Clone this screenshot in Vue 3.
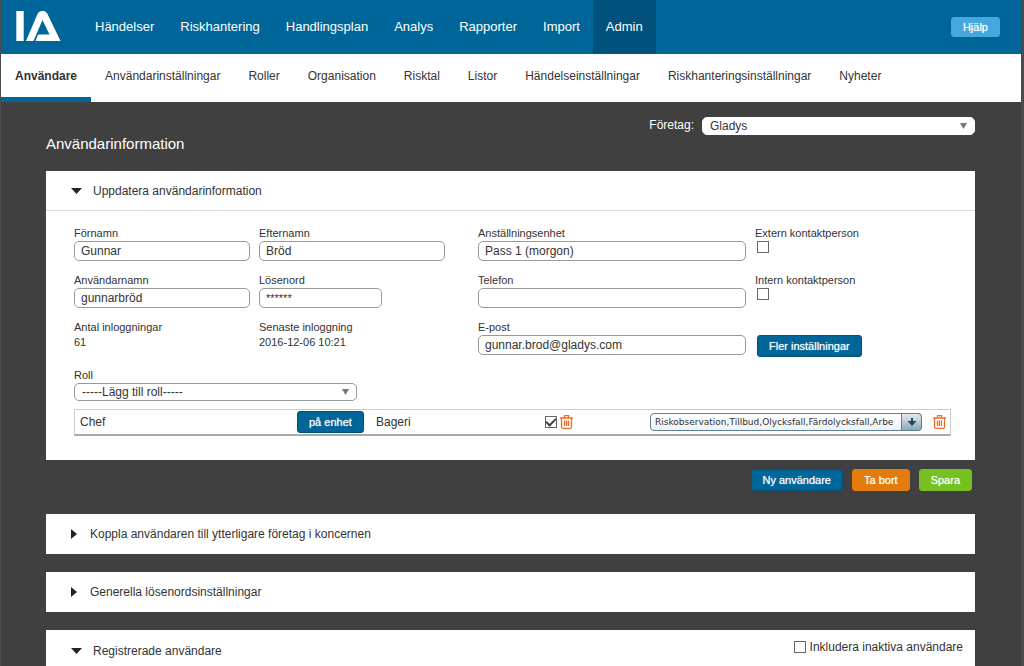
<script setup>
import { ref } from 'vue'

const mainNav = ['Händelser', 'Riskhantering', 'Handlingsplan', 'Analys', 'Rapporter', 'Import', 'Admin']
const subNav = [
  'Användare',
  'Användarinställningar',
  'Roller',
  'Organisation',
  'Risktal',
  'Listor',
  'Händelseinställningar',
  'Riskhanteringsinställningar',
  'Nyheter',
]

const user = ref({
  first: 'Gunnar',
  last: 'Bröd',
  unit: 'Pass 1 (morgon)',
  login: 'gunnarbröd',
  password: '******',
  phone: '',
  email: 'gunnar.brod@gladys.com',
  external: false,
  internal: false,
})
const roleActive = ref(true)
const includeInactive = ref(false)
</script>

<template>
  <div class="page">
    <header class="top">
      <a href="#" class="logo" aria-label="IA">
        <svg width="46" height="32" viewBox="0 0 46 32">
          <path fill="#fff" d="M1.300 0h7.400v30H1.300z" />
          <path
            fill="#fff"
            d="M11 30 22.500 3Q24 0 27 0h1.500Q31 0 32.500 3L45.500 30H20.500l2.700-6.500H34.500L27.500 9 18.500 30z"
          />
        </svg>
      </a>
      <nav class="main-nav">
        <a v-for="item in mainNav" :key="item" href="#" :class="{ current: item === 'Admin' }">{{ item }}</a>
      </nav>
      <button type="button" class="btn help">Hjälp</button>
    </header>

    <nav class="sub-nav">
      <a v-for="item in subNav" :key="item" href="#" :class="{ current: item === 'Användare' }">{{ item }}</a>
    </nav>

    <main class="main">
      <div class="company">
        <label for="company">Företag:</label>
        <div class="select">
          <select id="company"><option>Gladys</option></select>
          <svg class="caret" width="7" height="6" viewBox="0 0 7 6"><path fill="#777" d="M0 0h7L3.500 6z" /></svg>
        </div>
      </div>
      <h1>Användarinformation</h1>

      <section class="panel">
        <h2 class="panel-head ruled">
          <button type="button" class="toggle open">
            <svg width="11" height="6" viewBox="0 0 11 6"><path fill="#222" d="M0 0h11L5.500 6z" /></svg>
            Uppdatera användarinformation
          </button>
        </h2>

        <form class="form" @submit.prevent>
          <div class="fields">
            <div class="field">
              <label for="first">Förnamn</label>
              <input id="first" v-model="user.first" type="text" />
            </div>
            <div class="field wide-gap">
              <label for="last">Efternamn</label>
              <input id="last" v-model="user.last" type="text" />
            </div>
            <div class="field">
              <label for="unit">Anställningsenhet</label>
              <input id="unit" v-model="user.unit" type="text" />
            </div>
            <div class="field">
              <label for="external">Extern kontaktperson</label>
              <input id="external" v-model="user.external" type="checkbox" />
            </div>

            <div class="field">
              <label for="login">Användarnamn</label>
              <input id="login" v-model="user.login" type="text" />
            </div>
            <div class="field">
              <label for="password">Lösenord</label>
              <input id="password" v-model="user.password" class="short" type="text" />
            </div>
            <div class="field">
              <label for="phone">Telefon</label>
              <input id="phone" v-model="user.phone" type="text" />
            </div>
            <div class="field">
              <label for="internal">Intern kontaktperson</label>
              <input id="internal" v-model="user.internal" type="checkbox" />
            </div>

            <div class="field">
              <span class="caption">Antal inloggningar</span>
              <span>61</span>
            </div>
            <div class="field">
              <span class="caption">Senaste inloggning</span>
              <span>2016-12-06 10:21</span>
            </div>
            <div class="field">
              <label for="email">E-post</label>
              <input id="email" v-model="user.email" type="text" />
            </div>
            <div class="field more">
              <button type="button" class="btn">Fler inställningar</button>
            </div>
          </div>

          <div class="role">
            <label for="role">Roll</label>
            <div class="select outlined">
              <select id="role"><option>-----Lägg till roll-----</option></select>
              <svg class="caret" width="7" height="6" viewBox="0 0 7 6"><path fill="#777" d="M0 0h7L3.500 6z" /></svg>
            </div>
          </div>

          <table class="roles">
            <tbody>
              <tr>
                <td class="c-role">Chef</td>
                <td class="c-on"><button type="button" class="btn">på enhet</button></td>
                <td class="c-unit">Bageri</td>
                <td class="c-tick">
                  <div class="tools">
                    <input v-model="roleActive" type="checkbox" aria-label="Aktiv" />
                    <button type="button" class="trash" aria-label="Ta bort enhet">
                      <svg width="13" height="14" viewBox="0 0 13 14" fill="none" stroke="#ee6f23" stroke-width="1.3">
                        <path d="M0 3h13M4.500 3V.700h4V3M1.500 3v9q0 1.300 1.300 1.300h7.400q1.300 0 1.300-1.300V3M4.500 5.500v5.500M6.500 5.500v5.500M8.500 5.500v5.500" />
                      </svg>
                    </button>
                  </div>
                </td>
                <td class="c-types">
                  <div class="types">
                    <select aria-label="Händelsetyper">
                      <option>Riskobservation,Tillbud,Olycksfall,Färdolycksfall,Arbe</option>
                    </select>
                    <span class="drop">
                      <svg width="10" height="8" viewBox="0 0 10 8">
                        <path fill="#24465f" d="M4 0h2v3h3.500L5 8 .500 3H4z" />
                      </svg>
                    </span>
                  </div>
                </td>
                <td class="c-del">
                  <button type="button" class="trash" aria-label="Ta bort roll">
                    <svg width="13" height="14" viewBox="0 0 13 14" fill="none" stroke="#ee6f23" stroke-width="1.3">
                      <path d="M0 3h13M4.500 3V.700h4V3M1.500 3v9q0 1.300 1.300 1.300h7.400q1.300 0 1.300-1.300V3M4.500 5.500v5.500M6.500 5.500v5.500M8.500 5.500v5.500" />
                    </svg>
                  </button>
                </td>
              </tr>
            </tbody>
          </table>
        </form>
      </section>

      <div class="actions">
        <button type="button" class="btn">Ny användare</button>
        <button type="button" class="btn orange">Ta bort</button>
        <button type="button" class="btn green">Spara</button>
      </div>

      <section class="panel spaced">
        <h2 class="panel-head">
          <button type="button" class="toggle">
            <svg width="6" height="10" viewBox="0 0 6 10"><path fill="#222" d="M0 0v10L6 5z" /></svg>
            Koppla användaren till ytterligare företag i koncernen
          </button>
        </h2>
      </section>

      <section class="panel spaced">
        <h2 class="panel-head">
          <button type="button" class="toggle">
            <svg width="6" height="10" viewBox="0 0 6 10"><path fill="#222" d="M0 0v10L6 5z" /></svg>
            Generella lösenordsinställningar
          </button>
        </h2>
      </section>

      <section class="panel last">
        <h2 class="panel-head">
          <button type="button" class="toggle open">
            <svg width="11" height="6" viewBox="0 0 11 6"><path fill="#222" d="M0 0h11L5.500 6z" /></svg>
            Registrerade användare
          </button>
        </h2>
        <label class="inactive">
          <input v-model="includeInactive" type="checkbox" />
          Inkludera inaktiva användare
        </label>
      </section>
    </main>
  </div>
</template>

<style>
body {
  background: #4b4b4b;
}
</style>

<style scoped>
.page,
.page * {
  box-sizing: border-box;
}
.page {
  display: flex;
  flex-direction: column;
  min-height: 100vh;
  margin: 0 3px 0 1px;
  background: #404040;
  color: #333;
  font: 12px/16px "Liberation Sans", Arial, sans-serif;
}
a {
  color: inherit;
  text-decoration: none;
}
button,
input,
select {
  margin: 0;
  font-family: inherit;
  color: inherit;
}
svg {
  display: block;
  flex: none;
}

.top {
  display: flex;
  align-items: center;
  height: 54px;
  padding: 0 21px 0 14px;
  background: #006699;
  color: #fff;
  font-size: 13px;
}
.logo {
  width: 67px;
}
.main-nav {
  display: flex;
  flex: 1;
  align-self: stretch;
}
.main-nav a {
  display: flex;
  align-items: center;
  padding: 0 13px;
}
.main-nav .current {
  background: #00527d;
}

.sub-nav {
  display: flex;
  height: 48px;
  background: #fff;
}
.sub-nav a {
  padding: 14px 14px 0;
}
.sub-nav .current {
  border-bottom: 5px solid #006699;
  font-weight: bold;
}

.btn {
  height: 22px;
  padding: 0 11px;
  border: 1px solid #005078;
  border-radius: 3px;
  background: #006699;
  color: #fff;
  font-size: 11px;
  line-height: 20px;
  text-shadow: 0 0 1px rgba(255, 255, 255, 0.7);
  white-space: nowrap;
}
.btn.help {
  height: 20px;
  border-color: #44a8de;
  background: #44a8de;
  line-height: 18px;
}
.btn.orange {
  border-color: #e37c0c;
  background: #e37c0c;
}
.btn.green {
  border-color: #76c022;
  background: #76c022;
}

.main {
  display: flex;
  flex: 1;
  flex-direction: column;
  padding: 15px 46px 0 45px;
}
.company {
  display: flex;
  justify-content: flex-end;
  gap: 8px;
  color: #fff;
}
.company .select {
  width: 273px;
}
.select {
  display: grid;
  align-items: center;
}
.select > * {
  grid-area: 1 / 1;
}
.select select {
  appearance: none;
  width: 100%;
  height: 18px;
  padding: 0 7px;
  border: 1px solid #fff;
  border-radius: 5px;
  background: #fff;
  color: #333;
  font-size: 12px;
}
.select.outlined select {
  border-color: #999;
}
.caret {
  justify-self: end;
  margin-right: 8px;
  pointer-events: none;
}
h1 {
  margin: 0 0 19px;
  color: #fff;
  font-size: 15px;
  font-weight: normal;
  line-height: 17px;
}

.panel {
  background: #fff;
}
.panel-head {
  margin: 0;
  padding: 0 24px;
  font-size: 12px;
  font-weight: normal;
}
.panel-head.ruled {
  border-bottom: 1px solid #ddd;
}
.toggle {
  display: flex;
  align-items: center;
  gap: 13px;
  height: 40px;
  padding: 0 1px;
  border: 0;
  background: none;
  font-size: 12px;
}
.toggle.open {
  gap: 11px;
  height: 39px;
}

.form {
  padding: 14px 24px 24px 28px;
}
.fields {
  display: grid;
  grid-template-columns: 185fr 219fr 277fr 196fr;
  row-gap: 11px;
}
.field {
  display: flex;
  flex-direction: column;
  align-items: flex-start;
  padding-right: 9px;
  font-size: 11px;
  line-height: 14px;
}
.field.wide-gap {
  padding-right: 33px;
}
.field label,
.caption,
.role label {
  line-height: 16px;
}
.field input[type='text'] {
  width: 100%;
  height: 20px;
  padding: 0 6px;
  border: 1px solid #999;
  border-radius: 5px;
  background: #fff;
  font-size: 12px;
}
.field input[type='text'].short {
  width: 123px;
  font-size: 11px;
}
input[type='checkbox'] {
  display: grid;
  place-items: center;
  appearance: none;
  width: 12px;
  height: 12px;
  border: 1px solid #666;
  background: #fff;
}
input[type='checkbox']:checked::after {
  content: '';
  width: 8px;
  height: 4px;
  margin-bottom: 3px;
  border: solid #444;
  border-width: 0 0 2px 2px;
  transform: rotate(-45deg);
}
.field input[type='checkbox'] {
  margin-left: 2px;
}
.field.more {
  padding: 16px 0 0 2px;
}
.role {
  display: flex;
  flex-direction: column;
  width: 283px;
  margin-top: 10px;
  font-size: 11px;
}

.roles {
  width: 100%;
  margin-top: 8px;
  border: 1px solid #ccc;
  border-bottom: 2px solid #aaa;
  border-collapse: separate;
  border-spacing: 0;
  table-layout: fixed;
}
.roles td {
  height: 24px;
  padding: 0;
}
.roles .c-role {
  width: 222px;
  padding-left: 5px;
}
.c-on {
  width: 79px;
}
.c-on .btn {
  display: block;
}
.c-unit {
  width: 169px;
}
.c-types {
  width: 283px;
}
.c-del {
  width: 17px;
}
.tools {
  display: flex;
  align-items: center;
  gap: 3px;
}
.trash {
  display: block;
  padding: 0;
  border: 0;
  background: none;
}
.types {
  display: grid;
  width: 272px;
  height: 18px;
}
.types > * {
  grid-area: 1 / 1;
}
.types select {
  appearance: none;
  width: 100%;
  height: 18px;
  padding: 0 22px 0 4px;
  border: 1px solid #5f7f95;
  border-radius: 4px;
  background: linear-gradient(#fff, #eef2f5);
  font-family: "DejaVu Sans", Verdana, sans-serif;
  font-size: 9px;
}
.drop {
  display: grid;
  place-items: center;
  justify-self: end;
  width: 21px;
  border: 1px solid #5f7f95;
  border-radius: 0 4px 4px 0;
  background: linear-gradient(#e2eaf0, #8fa9bb);
  pointer-events: none;
}

.actions {
  display: flex;
  justify-content: flex-end;
  gap: 9px;
  margin: 9px 3px 23px 0;
}
.spaced {
  margin-bottom: 18px;
}
.last {
  display: flex;
  flex: 1;
  align-items: flex-start;
  justify-content: space-between;
  padding-right: 12px;
}
.last .toggle {
  height: 36px;
  padding-top: 5px;
}
.inactive {
  display: flex;
  align-items: center;
  gap: 4px;
  padding-top: 9px;
}
</style>
